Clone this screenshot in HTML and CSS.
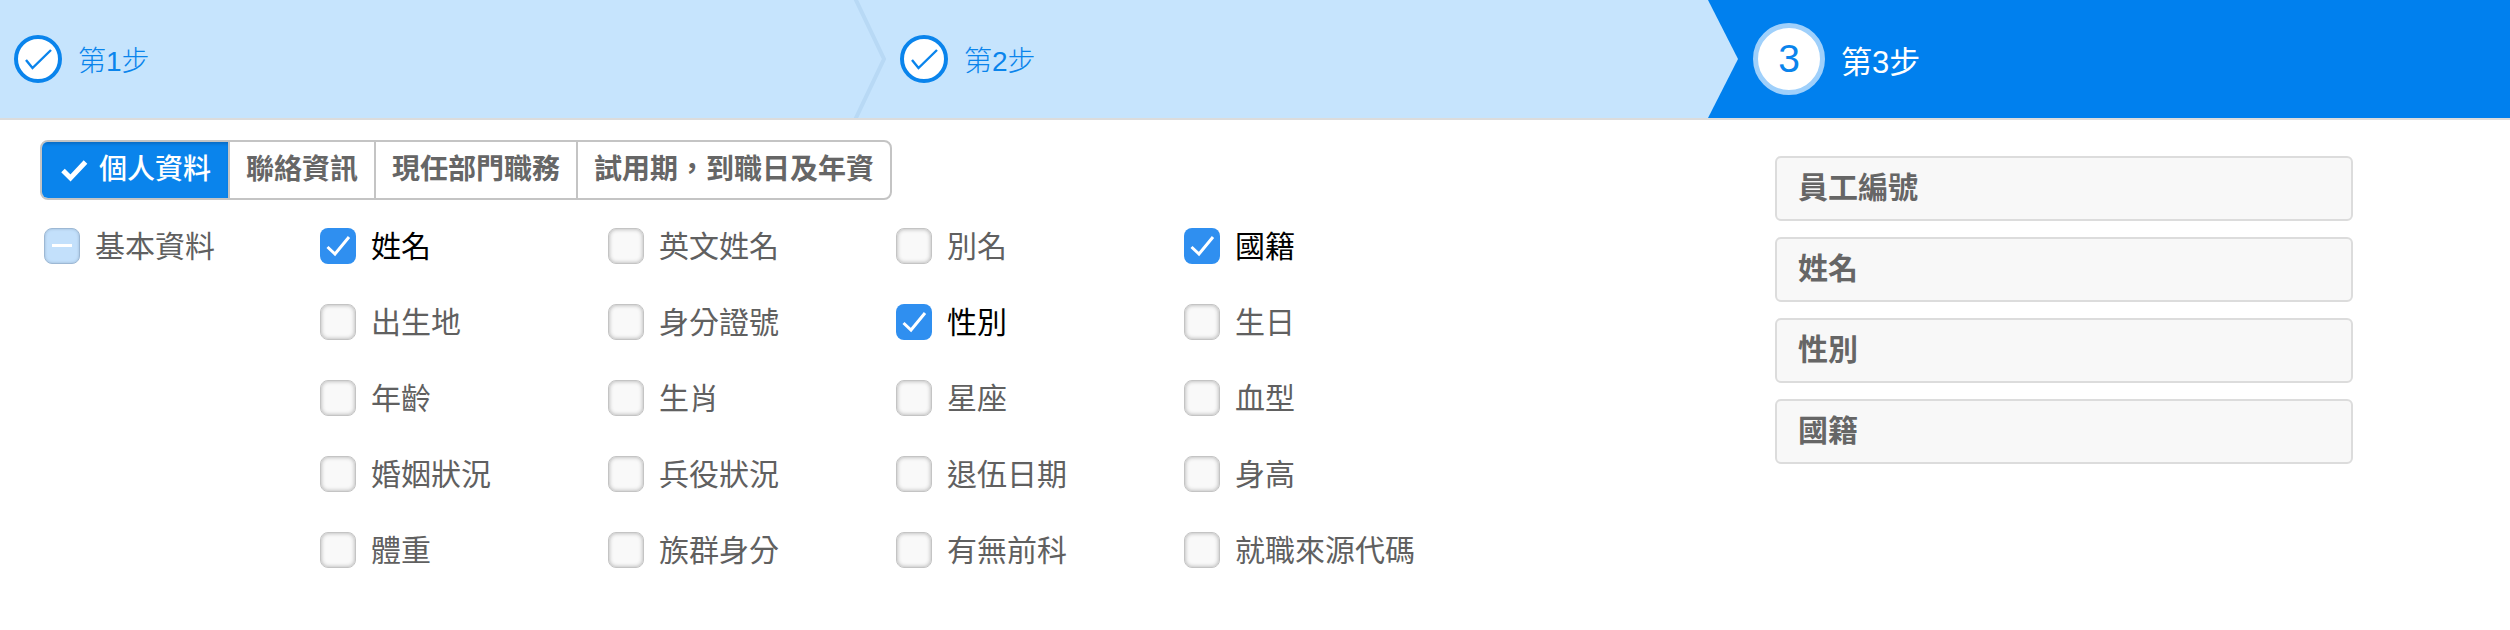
FILE: index.html
```html
<!DOCTYPE html>
<html lang="zh-Hant">
<head>
    <meta charset="UTF-8">
    <title>第3步</title>
    <link rel="stylesheet" href="styles.css">
</head>
<body>
    <div class="steps">
        <div class="step step-done step-first">
            <span class="step-icon">
                <svg width="48" height="48" viewBox="0 0 48 48"><path d="M12 25l6.500 8L37 15" fill="none" stroke="#0a84ec" stroke-width="2.400"/></svg>
            </span>
            <span class="step-text">第1步</span>
            <svg class="step-arrow" width="40" height="118" viewBox="0 0 40 118"><path d="M6 -2L35 59 6 120" fill="none" stroke="#b8d9f5" stroke-width="4"/></svg>
        </div>
        <div class="step step-done step-second">
            <span class="step-icon">
                <svg width="48" height="48" viewBox="0 0 48 48"><path d="M12 25l6.500 8L37 15" fill="none" stroke="#0a84ec" stroke-width="2.400"/></svg>
            </span>
            <span class="step-text">第2步</span>
        </div>
        <div class="step step-current">
            <span class="step-number">3</span>
            <span class="step-text">第3步</span>
        </div>
    </div>

    <div class="content">
        <div class="picker">
            <div class="tabs">
                <div class="tab tab-active">
                    <svg width="28" height="24" viewBox="0 0 28 24"><path d="M3 12.500l7.500 7.500L25.500 4" fill="none" stroke="#fff" stroke-width="5"/></svg>
                    個人資料
                </div>
                <div class="tab">聯絡資訊</div>
                <div class="tab">現任部門職務</div>
                <div class="tab">試用期，到職日及年資</div>
            </div>

            <div class="fields">
                <label class="field group-field"><span class="box box-mixed"></span>基本資料</label>
                <div class="field-grid">
                    <label class="field field-on"><span class="box box-on"><svg width="36" height="36" viewBox="0 0 36 36"><path d="M7.500 19l7.500 7L29 9" fill="none" stroke="#fff" stroke-width="3"/></svg></span>姓名</label>
                    <label class="field"><span class="box"></span>英文姓名</label>
                    <label class="field"><span class="box"></span>別名</label>
                    <label class="field field-on"><span class="box box-on"><svg width="36" height="36" viewBox="0 0 36 36"><path d="M7.500 19l7.500 7L29 9" fill="none" stroke="#fff" stroke-width="3"/></svg></span>國籍</label>

                    <label class="field"><span class="box"></span>出生地</label>
                    <label class="field"><span class="box"></span>身分證號</label>
                    <label class="field field-on"><span class="box box-on"><svg width="36" height="36" viewBox="0 0 36 36"><path d="M7.500 19l7.500 7L29 9" fill="none" stroke="#fff" stroke-width="3"/></svg></span>性別</label>
                    <label class="field"><span class="box"></span>生日</label>

                    <label class="field"><span class="box"></span>年齡</label>
                    <label class="field"><span class="box"></span>生肖</label>
                    <label class="field"><span class="box"></span>星座</label>
                    <label class="field"><span class="box"></span>血型</label>

                    <label class="field"><span class="box"></span>婚姻狀況</label>
                    <label class="field"><span class="box"></span>兵役狀況</label>
                    <label class="field"><span class="box"></span>退伍日期</label>
                    <label class="field"><span class="box"></span>身高</label>

                    <label class="field"><span class="box"></span>體重</label>
                    <label class="field"><span class="box"></span>族群身分</label>
                    <label class="field"><span class="box"></span>有無前科</label>
                    <label class="field"><span class="box"></span>就職來源代碼</label>
                </div>
            </div>
        </div>

        <div class="selected">
            <div class="selected-item">員工編號</div>
            <div class="selected-item">姓名</div>
            <div class="selected-item">性別</div>
            <div class="selected-item">國籍</div>
        </div>
    </div>
</body>
</html>
```

FILE: styles.css
```css
* {
    box-sizing: border-box;
}
html, body {
    margin: 0;
    padding: 0;
    height: 630px;
    overflow: hidden;
    background: #fff;
}
body {
    font-family: "Liberation Sans", "Noto Sans CJK TC", sans-serif;
    color: #606060;
}

/* steps */
.steps {
    display: flex;
    height: 120px;
    background: #c6e4fd;
    border-bottom: 2px solid #dcdcdc;
}
.step {
    position: relative;
    display: flex;
    align-items: center;
}
.step-first {
    width: 884px;
    padding-left: 14px;
}
.step-second {
    width: 824px;
    padding-left: 16px;
}
.step-current {
    flex: 1;
    padding-left: 45px;
    background: #0080ee;
}
/* the notch on the left of the current step */
.step-current::before {
    content: "";
    position: absolute;
    top: 0;
    left: 0;
    width: 30px;
    height: 100%;
    background: #c6e4fd;
    clip-path: polygon(0 0, 100% 50%, 0 100%);
}
.step-arrow {
    position: absolute;
    top: 0;
    right: -5px;
    filter: blur(0.7px);
}
.step-icon {
    width: 48px;
    height: 48px;
    border: 4px solid #0a84ec;
    border-radius: 50%;
    background: #fff;
    display: flex;
    align-items: center;
    justify-content: center;
    flex-shrink: 0;
}
.step-icon svg {
    flex-shrink: 0;
}
.step-text {
    margin-left: 16px;
    font-size: 28px;
    font-weight: 300;
    color: #0a84ec;
}
.step-number {
    width: 72px;
    height: 72px;
    border: 5px solid #9fd0fb;
    border-radius: 50%;
    background: #fff;
    color: #0a84ec;
    font-size: 39px;
    display: flex;
    align-items: center;
    justify-content: center;
    flex-shrink: 0;
}
.step-current .step-text {
    margin-left: 16px;
    font-size: 31px;
    font-weight: 400;
    color: #fff;
}

/* field picker */
.content {
    display: flex;
}
.picker {
    width: 1775px;
    padding: 20px 0 0 40px;
}
.tabs {
    display: inline-flex;
    height: 60px;
    border: 2px solid #c4c4c4;
    border-radius: 8px;
    overflow: hidden;
}
.tab {
    display: flex;
    align-items: center;
    padding: 0 16px;
    font-size: 28px;
    font-weight: 700;
    line-height: 1;
    color: #666;
    border-left: 2px solid #c4c4c4;
}
.tab:first-child {
    border-left: 0;
}
.tab-active {
    padding: 0 17px 0 18px;
    gap: 11px;
    background: #0a84ec;
    box-shadow: inset 0 3px 3px -1px #0a6cc4;
    font-weight: 500;
    color: #fff;
}
.fields {
    display: flex;
    margin-top: 28px;
}
.group-field {
    width: 280px;
    padding-left: 4px;
    height: 36px;
}
.field-grid {
    display: grid;
    grid-template-columns: repeat(4, 288px);
    grid-auto-rows: 76px;
}
.field {
    display: flex;
    align-items: flex-start;
    gap: 15px;
    font-size: 30px;
    line-height: 38px;
    white-space: nowrap;
}
.field-on {
    color: #000;
}
.box {
    width: 36px;
    height: 36px;
    border: 1px solid #c4c4c4;
    border-radius: 8px;
    background: #f9f9f9;
    box-shadow: inset 0 0 4px #aaa;
    flex-shrink: 0;
}
.box-on {
    border: 0;
    background: #2f8ff0;
    box-shadow: none;
}
.box-on svg {
    display: block;
}
.box-mixed {
    position: relative;
    border-color: #9db8d4;
    background: #c3e0fb;
    box-shadow: inset 0 0 3px #9db8d4;
}
.box-mixed::after {
    content: "";
    position: absolute;
    top: 15px;
    left: 7px;
    width: 20px;
    height: 3px;
    background: #fff;
}

/* selected fields */
.selected {
    width: 578px;
    padding-top: 36px;
    display: flex;
    flex-direction: column;
    gap: 16px;
}
.selected-item {
    height: 65px;
    padding: 0 0 7px 21px;
    display: flex;
    align-items: center;
    font-size: 30px;
    font-weight: 700;
    color: #666;
    background: #f8f8f8;
    border: 2px solid #dcdcdc;
    border-radius: 6px;
}
```
